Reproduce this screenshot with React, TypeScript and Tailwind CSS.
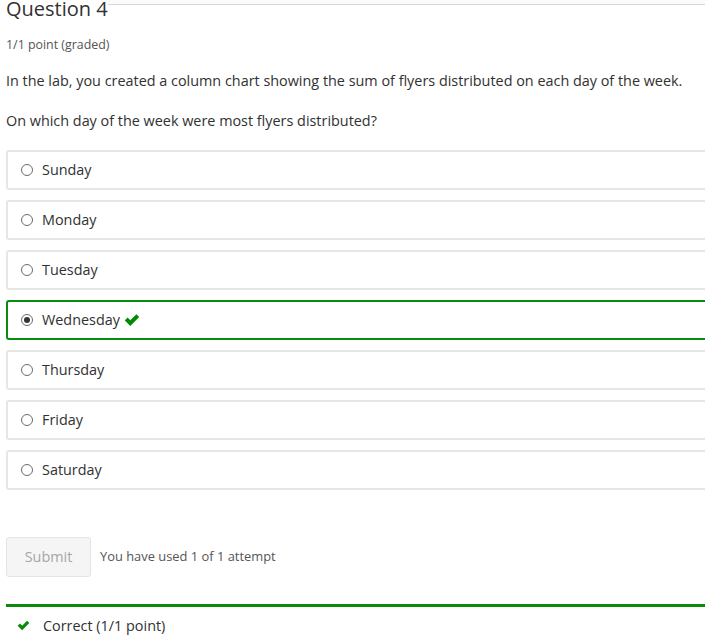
import { useState } from "react";

const days = ["Sunday", "Monday", "Tuesday", "Wednesday", "Thursday", "Friday", "Saturday"];

const Check = ({ className }: { className?: string }) => (
  <svg viewBox="0 0 16 16" className={className} fill="currentColor">
    <path d="M0.8 8.4 L3.6 5.6 L6.3 8.3 L12.4 2.2 L15.2 5 L6.3 13.9 Z" />
  </svg>
);

const Option = ({ label, selected }: { label: string; selected: boolean }) => (
  <label
    className={`mr-[-12px] flex h-[40px] items-center rounded-[3px] border-2 pl-[13px] text-[14.4px] text-[#313131] ${
      selected ? "border-[#0b8a0b]" : "border-[#e6e6e6]"
    }`}
  >
    <span className="flex h-[12px] w-[12px] items-center justify-center rounded-full border border-[#6b6b6b] bg-white">
      {selected && <span className="h-[6px] w-[6px] rounded-full bg-[#333]" />}
    </span>
    <span className="ml-[9px]">{label}</span>
    {selected && <Check className="ml-[4px] h-[16px] w-[16px] text-[#008a00]" />}
  </label>
);

export default function App() {
  const [answer] = useState("Wednesday");

  return (
    <div className="relative h-[641px] w-full overflow-hidden bg-white pl-[6px] font-['Open_Sans',sans-serif]">
      {/* strip of the page header that sits over the scrolled heading */}
      <div className="absolute top-0 right-0 left-[108px] h-[5px] border-b border-[#d8d8d8] bg-[#fbfbfb]" />

      <h3 className="mt-[-3px] text-[20px] leading-[24px] text-[#313131]">Question 4</h3>
      <div className="mt-[15px] text-[12.4px] leading-[18px] text-[#555]">1/1 point (graded)</div>

      <p className="mt-[17px] text-[14.4px] leading-[20px] text-[#313131]">
        In the lab, you created a column chart showing the sum of flyers distributed on each day of the week.
      </p>
      <p className="mt-[20px] text-[14.4px] leading-[20px] text-[#313131]">
        On which day of the week were most flyers distributed?
      </p>

      <div className="mt-[19px] flex flex-col gap-[10px]">
        {days.map((d) => (
          <Option key={d} label={d} selected={d === answer} />
        ))}
      </div>

      <div className="mt-[47px] flex items-center">
        <button
          disabled
          className="h-[40px] w-[85px] rounded-[3px] border border-[#e4e4e4] bg-[#f5f5f5] text-[14.4px] text-[#a6a6a6]"
        >
          Submit
        </button>
        <span className="ml-[9px] text-[12.9px] text-[#555]">You have used 1 of 1 attempt</span>
      </div>

      <div className="mt-[27px] h-[3px] bg-[#0b8a0b]" />
      <div className="mt-[8px] flex items-center pl-[11px] text-[14.4px] text-[#313131]">
        <Check className="h-[13px] w-[13px] text-[#0b8a0b]" />
        <span className="ml-[13px]">Correct (1/1 point)</span>
      </div>
    </div>
  );
}
